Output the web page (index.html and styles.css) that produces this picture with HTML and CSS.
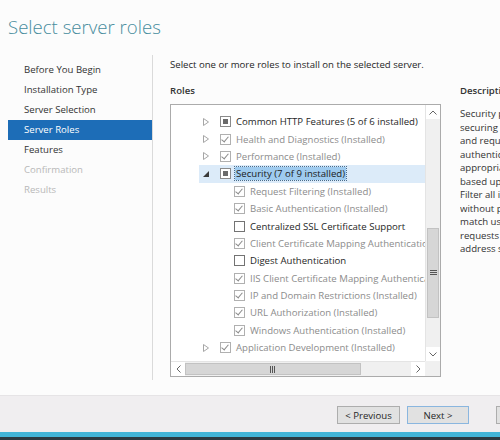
FILE: index.html
```html
<!DOCTYPE html>
<html lang="en">
<head>
    <meta charset="UTF-8">
    <title>Add Roles and Features Wizard</title>
    <link rel="stylesheet" href="styles.css">
</head>
<body>
    <div class="wizard">
        <div class="wizard-header">
            <h1>Select server roles</h1>
        </div>

        <div class="wizard-main">
            <ul class="steps">
                <li>Before You Begin</li>
                <li>Installation Type</li>
                <li>Server Selection</li>
                <li class="active">Server Roles</li>
                <li>Features</li>
                <li class="disabled">Confirmation</li>
                <li class="disabled">Results</li>
            </ul>

            <div class="page">
                <p class="intro">Select one or more roles to install on the selected server.</p>
                <div class="columns">
                    <div class="roles">
                        <div class="col-title">Roles</div>
                        <div class="tree-box">
                            <div class="tree">
                                <div class="row lvl1">
                                    <span class="exp"><svg width="6" height="8" viewBox="0 0 6 8"><polygon points="0.5,0.5 5.5,4 0.5,7.5" fill="none" stroke="#a6a6a6"/></svg></span>
                                    <span class="cb partial"></span><span class="label">Common HTTP Features (5 of 6 installed)</span>
                                </div>
                                <div class="row lvl1 installed">
                                    <span class="exp"><svg width="6" height="8" viewBox="0 0 6 8"><polygon points="0.5,0.5 5.5,4 0.5,7.5" fill="none" stroke="#a6a6a6"/></svg></span>
                                    <span class="cb checked"></span><span class="label">Health and Diagnostics (Installed)</span>
                                </div>
                                <div class="row lvl1 installed">
                                    <span class="exp"><svg width="6" height="8" viewBox="0 0 6 8"><polygon points="0.5,0.5 5.5,4 0.5,7.5" fill="none" stroke="#a6a6a6"/></svg></span>
                                    <span class="cb checked"></span><span class="label">Performance (Installed)</span>
                                </div>
                                <div class="row lvl1 selected">
                                    <span class="exp"><svg width="6" height="6" viewBox="0 0 6 6"><polygon points="6,0 6,6 0,6" fill="#3a3a3a"/></svg></span>
                                    <span class="cb partial"></span><span class="label">Security (7 of 9 installed)</span>
                                </div>
                                <div class="row lvl2 installed"><span class="cb checked"></span><span class="label">Request Filtering (Installed)</span></div>
                                <div class="row lvl2 installed"><span class="cb checked"></span><span class="label">Basic Authentication (Installed)</span></div>
                                <div class="row lvl2"><span class="cb"></span><span class="label">Centralized SSL Certificate Support</span></div>
                                <div class="row lvl2 installed"><span class="cb checked"></span><span class="label">Client Certificate Mapping Authentication (Installed)</span></div>
                                <div class="row lvl2"><span class="cb"></span><span class="label">Digest Authentication</span></div>
                                <div class="row lvl2 installed"><span class="cb checked"></span><span class="label">IIS Client Certificate Mapping Authentication (Installed)</span></div>
                                <div class="row lvl2 installed"><span class="cb checked"></span><span class="label">IP and Domain Restrictions (Installed)</span></div>
                                <div class="row lvl2 installed"><span class="cb checked"></span><span class="label">URL Authorization (Installed)</span></div>
                                <div class="row lvl2 installed"><span class="cb checked"></span><span class="label">Windows Authentication (Installed)</span></div>
                                <div class="row lvl1 installed">
                                    <span class="exp"><svg width="6" height="8" viewBox="0 0 6 8"><polygon points="0.5,0.5 5.5,4 0.5,7.5" fill="none" stroke="#a6a6a6"/></svg></span>
                                    <span class="cb checked"></span><span class="label">Application Development (Installed)</span>
                                </div>
                            </div>
                            <div class="vscroll">
                                <span class="arrow"><svg width="8" height="5" viewBox="0 0 8 5"><polyline points="0.5,4.5 4,1 7.5,4.5" fill="none" stroke="#666"/></svg></span>
                                <span class="track"><span class="thumb v"><svg width="7" height="6" viewBox="0 0 7 6"><path d="M0 0.5h7M0 2.5h7M0 4.5h7" stroke="#555"/></svg></span></span>
                                <span class="arrow"><svg width="8" height="5" viewBox="0 0 8 5"><polyline points="0.5,0.5 4,4 7.5,0.5" fill="none" stroke="#666"/></svg></span>
                            </div>
                            <div class="hscroll">
                                <span class="arrow"><svg width="5" height="8" viewBox="0 0 5 8"><polyline points="4.5,0.5 1,4 4.5,7.5" fill="none" stroke="#666"/></svg></span>
                                <span class="track"><span class="thumb h"><svg width="6" height="7" viewBox="0 0 6 7"><path d="M0.5 0v7M2.5 0v7M4.5 0v7" stroke="#555"/></svg></span></span>
                                <span class="arrow"><svg width="5" height="8" viewBox="0 0 5 8"><polyline points="0.5,0.5 4,4 0.5,7.5" fill="none" stroke="#666"/></svg></span>
                            </div>
                            <div class="corner"></div>
                        </div>
                    </div>

                    <div class="description">
                        <div class="col-title">Description</div>
                        <p>Security provides infrastructure for<br>
                        securing the Web server from users<br>
                        and requests. IIS supports multiple<br>
                        authentication methods. Pick an<br>
                        appropriate authentication scheme<br>
                        based upon the role of the server.<br>
                        Filter all incoming requests, rejecting<br>
                        without processing requests that do<br>
                        match user defined values, or restrict<br>
                        requests based on originating<br>
                        address space.</p>
                    </div>
                </div>
            </div>
        </div>

        <div class="wizard-footer">
            <button class="btn">&lt; Previous</button>
            <button class="btn default">Next &gt;</button>
            <button class="btn far">Install</button>
        </div>
        <div class="taskbar-edge"></div>
        <div class="taskbar"></div>
    </div>
</body>
</html>
```

FILE: styles.css
```css
body {
    margin: 0;
    background: #2b3a41;
    font-family: 'Open Sans', 'Noto Sans', sans-serif;
    font-size: 9.6px;
    color: #262626;
}

.wizard {
    width: 500px;
    height: 440px;
    overflow: hidden;
    background: #fcfcfc;
    display: flex;
    flex-direction: column;
}

.wizard-header {
    height: 55px;
    flex: none;
}

.wizard-header h1 {
    margin: 0;
    padding: 14px 0 0 8px;
    font-size: 18.6px;
    font-weight: 300;
    line-height: 26px;
    color: #478c9d;
}

.wizard-main {
    flex: none;
    height: 340px;
    display: flex;
}

.steps {
    list-style: none;
    margin: 0 0 15px;
    padding: 5px 0 0 8px;
    width: 144px;
    border-right: 1px solid #dadada;
}

.steps li {
    height: 20px;
    line-height: 20px;
    padding-left: 16px;
    color: #333;
}

.steps li.active {
    background: #1d6db7;
    color: #fff;
}

.steps li.disabled {
    color: #b8b8b8;
}

.page {
    flex: 1;
    padding-left: 17px;
    min-width: 0;
}

.intro {
    margin: 3px 0 0;
    line-height: 14px;
}

.columns {
    display: flex;
    gap: 19px;
}

.col-title {
    margin-top: 12px;
    height: 20px;
    line-height: 14px;
    font-weight: 600;
    color: #333;
}

.roles {
    width: 271px;
    flex: none;
}

.tree-box {
    height: 271px;
    border: 1px solid #ababab;
    background: #fff;
    display: grid;
    grid-template-columns: 1fr 15px;
    grid-template-rows: 1fr 15px;
}

.tree {
    padding-top: 8px;
    overflow: hidden;
}

.row {
    height: 17.4px;
    display: flex;
    align-items: center;
    white-space: nowrap;
    margin-left: 28px;
}

.row.lvl1 {
    padding-left: 4px;
}

.row.lvl2 {
    padding-left: 35px;
}

.row.installed .label {
    color: #8c8c8c;
}

.row.selected {
    background: #dcebf9;
}

.row.selected .label {
    background: #9fcbef;
    color: #1a1a1a;
    outline: 1px dotted #4a6d8c;
    padding: 0 1px;
    margin-left: -1px;
}

.exp {
    width: 17px;
    display: flex;
    align-items: center;
}

.cb {
    width: 9px;
    height: 9px;
    flex: none;
    border: 1px solid #737373;
    background: #fff;
    margin-right: 5px;
    position: relative;
}

.cb.checked {
    border-color: #b0b0b0;
}

.cb.checked::after {
    content: "";
    position: absolute;
    left: 2px;
    top: 0;
    width: 3px;
    height: 6px;
    border: solid #8a8a8a;
    border-width: 0 1.5px 1.5px 0;
    transform: rotate(40deg);
}

.cb.partial {
    border-color: #8a8a8a;
}

.cb.partial::after {
    content: "";
    position: absolute;
    left: 2px;
    top: 2px;
    width: 5px;
    height: 5px;
    background: #6a6a6a;
}

.vscroll {
    display: flex;
    flex-direction: column;
    border-left: 1px solid #e4e4e4;
    background: #f0f0f0;
}

.hscroll {
    display: flex;
    border-top: 1px solid #e4e4e4;
    background: #f0f0f0;
}

.arrow {
    flex: none;
    width: 14px;
    height: 14px;
    display: flex;
    align-items: center;
    justify-content: center;
    background: #fff;
}

.vscroll .arrow {
    width: auto;
}

.track {
    flex: 1;
    display: flex;
}

.vscroll .track {
    flex-direction: column;
    padding-top: 109px;
}

.thumb {
    display: flex;
    align-items: center;
    justify-content: center;
    background: #d6d6d6;
    border: 1px solid #c2c2c2;
}

.thumb.v {
    height: 88px;
    margin: 0 1px;
}

.thumb.h {
    width: 174px;
    margin: 1px 0;
}

.corner {
    background: #f0f0f0;
}

.description {
    flex: none;
    width: 40px;
    overflow: hidden;
    white-space: nowrap;
}

.description p {
    margin: 3px 0 0;
    line-height: 13.5px;
    color: #333;
}

.wizard-footer {
    flex: none;
    height: 37px;
    box-sizing: border-box;
    background: #f0eef0;
    border-top: 1px solid #e6e4e6;
    display: flex;
    align-items: flex-start;
    gap: 7px;
    padding: 10px 0 0 337px;
}

.btn {
    flex: none;
    width: 63px;
    height: 18px;
    padding: 0;
    font-family: inherit;
    font-size: 9.6px;
    color: #262626;
    background: #e1e1e1;
    border: 1px solid #adadad;
}

.btn.default {
    width: 62px;
    border-color: #8ab6df;
}

.btn.far {
    margin-left: 20px;
}

.taskbar-edge {
    flex: none;
    height: 5px;
    background: #41b5d8;
}

.taskbar {
    flex: 1;
    background: #2b3a41;
}
```
